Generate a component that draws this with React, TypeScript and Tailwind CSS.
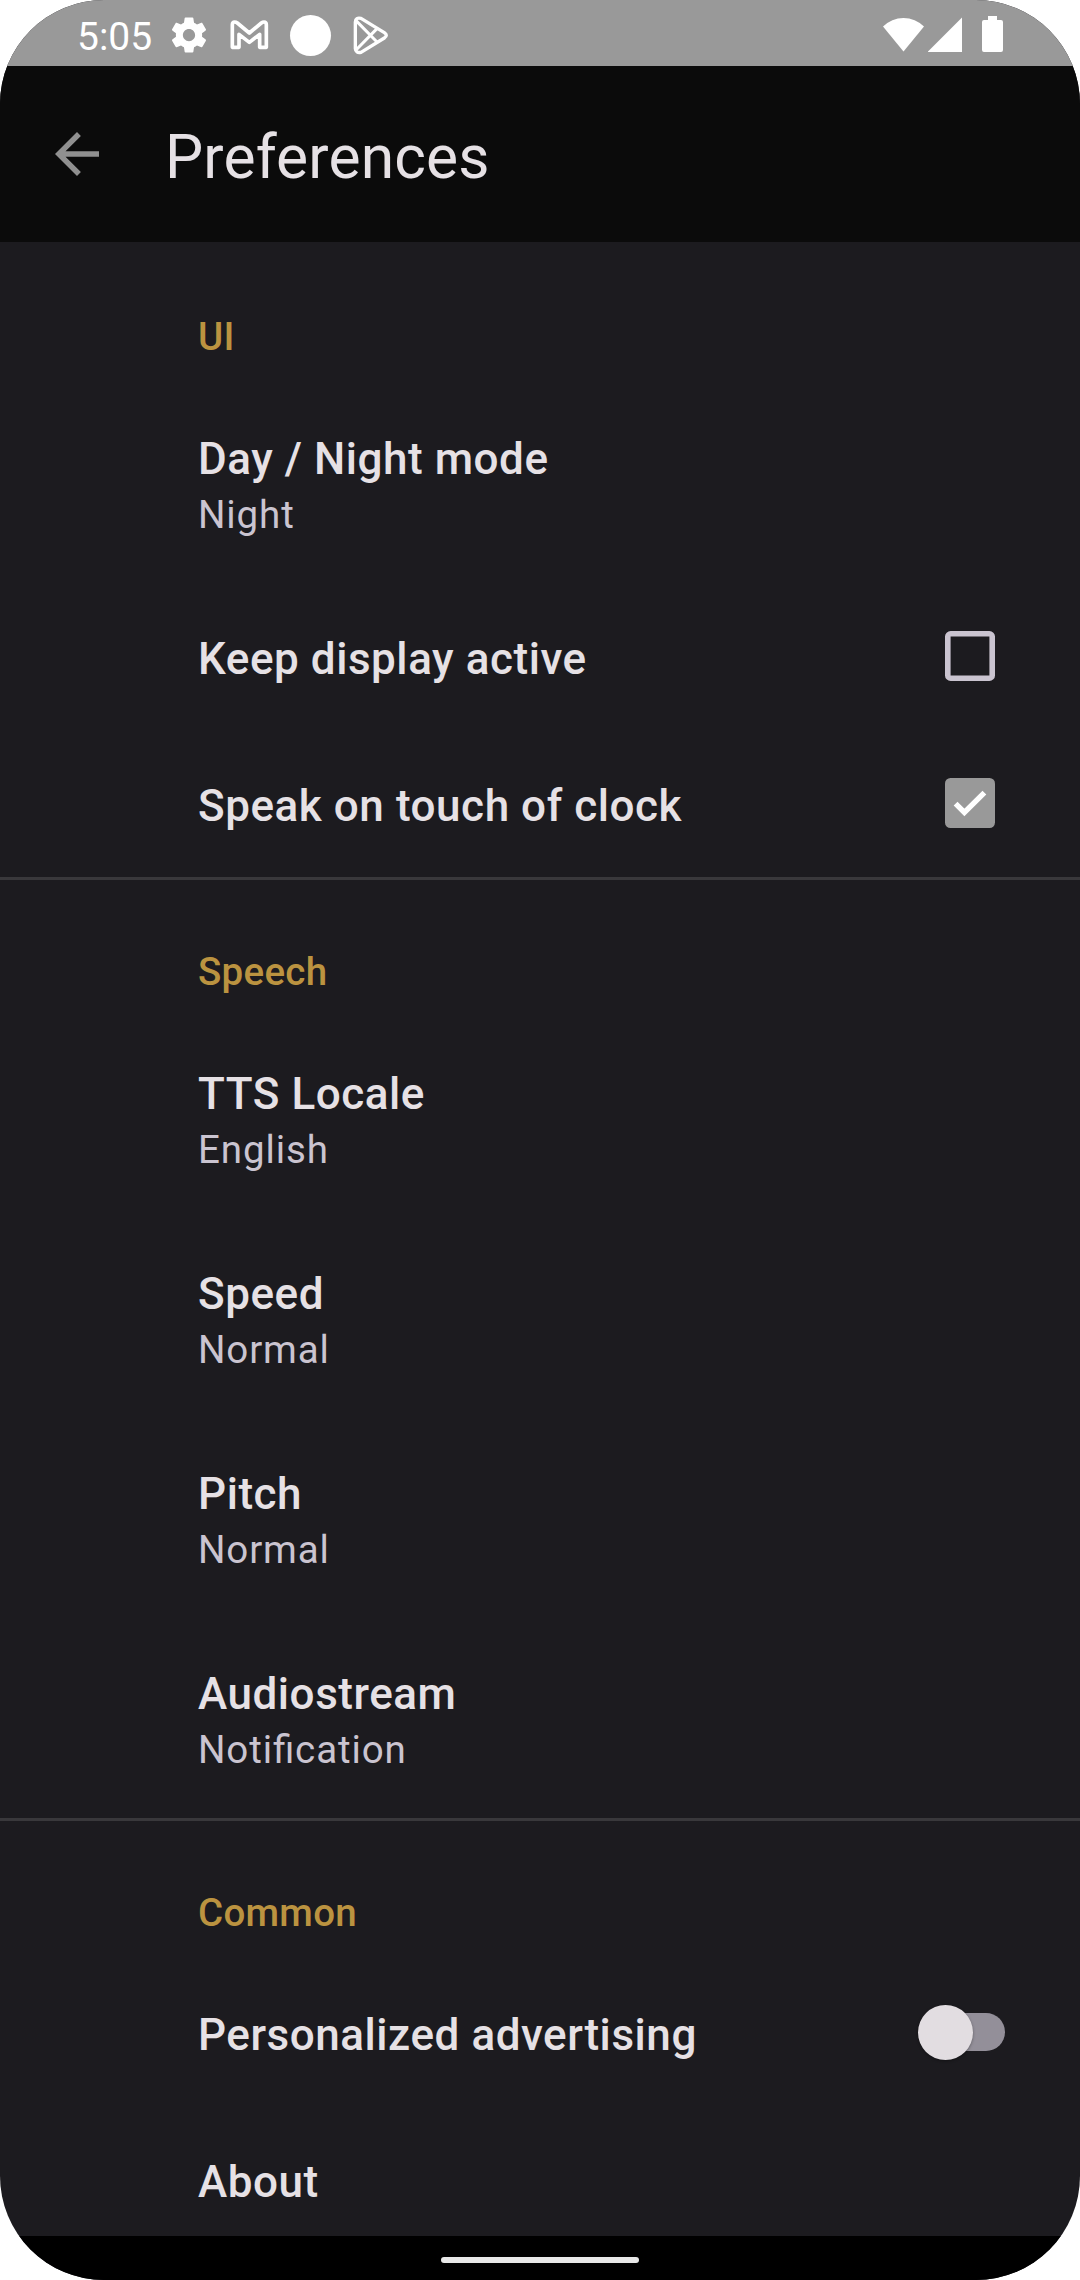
import type { ReactNode } from 'react'

function StatusBar() {
  return (
    <div className="flex h-[66px] shrink-0 items-start justify-between bg-[#999999] text-white">
      <div className="flex h-full">
        <span className="ml-[77px] mt-[14px] w-[90px] text-[39px] leading-[46px]">5:05</span>
        <svg className="ml-[1px] mt-[14px] size-[42px]" viewBox="0 0 24 24" fill="currentColor">
          <path d="M19.43 12.98c.04-.32.07-.64.07-.98s-.03-.66-.07-.98l2.11-1.65c.19-.15.24-.42.12-.64l-2-3.46c-.12-.22-.39-.3-.61-.22l-2.49 1c-.52-.4-1.08-.73-1.69-.98l-.38-2.65C14.46 2.18 14.25 2 14 2h-4c-.25 0-.46.18-.49.42l-.38 2.65c-.61.25-1.17.59-1.69.98l-2.49-1c-.23-.09-.49 0-.61.22l-2 3.46c-.13.22-.07.49.12.64l2.11 1.65c-.04.32-.07.65-.07.98s.03.66.07.98l-2.11 1.65c-.19.15-.24.42-.12.64l2 3.46c.12.22.39.3.61.22l2.49-1c.52.4 1.08.73 1.69.98l.38 2.65c.03.24.24.42.49.42h4c.25 0 .46-.18.49-.42l.38-2.65c.61-.25 1.17-.59 1.69-.98l2.49 1c.23.09.49 0 .61-.22l2-3.46c.12-.22.07-.49-.12-.64l-2.11-1.65zM12 15.5c-1.93 0-3.5-1.57-3.5-3.5s1.57-3.5 3.5-3.5 3.5 1.57 3.5 3.5-1.57 3.5-3.5 3.5z" />
        </svg>
        <svg className="ml-[20px] mt-[18px] h-[34px] w-[40px]" viewBox="690 54 120 102" fill="none" stroke="currentColor" strokeWidth="11" strokeLinejoin="round">
          <path d="M697 142V74Q697 66 704 66Q708 66 712 69L748 99L784 69Q788 66 792 66Q799 66 799 74V142H779V103L748 127L717 103V142Z" />
        </svg>
        <span className="ml-[20px] mt-[15px] size-[41px] rounded-full bg-white" />
        <svg className="ml-[20px] mt-[15px] h-[41px] w-[40px]" viewBox="1054 45 120 123" fill="none" stroke="currentColor" strokeWidth="10" strokeLinejoin="round">
          <path d="M1067 66V146Q1068 160 1084 157L1154 114Q1166 106 1154 98L1084 55Q1068 51 1067 66Z" />
          <path d="M1069 62L1132 126M1069 150L1132 86" strokeWidth="9" />
        </svg>
      </div>
      <div className="mr-[77px] flex h-full">
        <svg className="mt-[17px] h-[35px] w-[42px]" viewBox="0 0 42 35" fill="currentColor">
          <path d="M20.5 34.5L0 9.5A29 29 0 0 1 41 9.5Z" />
        </svg>
        <svg className="ml-[3px] mt-[17px] size-[35px]" viewBox="0 0 35 35" fill="currentColor">
          <path d="M-0.5 35L34 0.5V35Z" />
        </svg>
        <svg className="ml-[19px] mt-[16px] h-[36px] w-[21px]" viewBox="0 0 21 36" fill="currentColor">
          <path d="M6 0H15V4H19Q21 4 21 6V34Q21 36 19 36H2Q0 36 0 34V6Q0 4 2 4H6Z" />
        </svg>
      </div>
    </div>
  )
}

function Category({ title, divided, children }: { title: string; divided?: boolean; children: ReactNode }) {
  return (
    <section className={divided ? 'shadow-[inset_0_3px_0_#39383b]' : ''}>
      <h2 className="h-[141px] pl-[198px] pt-[72px] text-[38.5px] leading-[46px] font-medium tracking-[0.275px] text-[#bb9340]">
        {title}
      </h2>
      {children}
    </section>
  )
}

function Row({ title, summary, children }: { title: string; summary?: string; children?: ReactNode }) {
  return (
    <div className={`flex items-start justify-between pl-[198px] ${summary ? 'h-[200px]' : 'h-[147px]'}`}>
      <div className="pt-[50px]">
        <p className="text-[44px] leading-[52px] font-medium tracking-[0.55px] whitespace-nowrap text-[#e6e1e5]">{title}</p>
        {summary && (
          <p className="mt-[7px] text-[38.5px] leading-[46px] tracking-[0.88px] text-[#cac4d0] [font-feature-settings:'liga']">
            {summary}
          </p>
        )}
      </div>
      {children}
    </div>
  )
}

function Checkbox({ checked }: { checked?: boolean }) {
  return (
    <svg className="mr-[85px] mt-[48px] size-[50px]" viewBox="0 0 50 50" fill="none">
      {checked ? (
        <>
          <rect width="50" height="50" rx="5.5" fill="#999999" />
          <path d="M10.6 25.6L19.4 34.4L39.4 14.6" stroke="#fff" strokeWidth="5.4" />
        </>
      ) : (
        <rect x="2.8" y="2.8" width="44.4" height="44.4" rx="2.8" stroke="#cac4d0" strokeWidth="5.6" />
      )}
    </svg>
  )
}

function Toggle() {
  return (
    <span className="mr-[75px] mt-[54px] flex h-[38px] w-[80px] items-center rounded-full bg-[#938f99]">
      <span className="-ml-[7px] size-[55px] shrink-0 rounded-full bg-[#e2dde1] shadow-[0_1px_3px_rgba(0,0,0,0.35)]" />
    </span>
  )
}

export default function App() {
  return (
    <div className="h-[2280px] w-[1080px] bg-white">
      <div className="flex h-full flex-col overflow-hidden rounded-[104px] bg-[#1c1b1f] font-['Roboto',sans-serif]">
        <StatusBar />
        <header className="flex h-[176px] shrink-0 items-center bg-[#0b0b0b]">
          <svg className="ml-[44px] size-[66px]" viewBox="0 0 24 24" fill="#909090">
            <path d="M20 11H7.83l5.59-5.59L12 4l-8 8 8 8 1.41-1.41L7.83 13H20v-2z" />
          </svg>
          <h1 className="ml-[55px] mt-[7px] text-[60.5px] leading-[72px] tracking-[0.15px] text-[#e6e1e5]">Preferences</h1>
        </header>
        <main className="min-h-0 flex-1 overflow-hidden">
          <Category title="UI">
            <Row title="Day / Night mode" summary="Night" />
            <Row title="Keep display active">
              <Checkbox />
            </Row>
            <Row title="Speak on touch of clock">
              <Checkbox checked />
            </Row>
          </Category>
          <Category title="Speech" divided>
            <Row title="TTS Locale" summary="English" />
            <Row title="Speed" summary="Normal" />
            <Row title="Pitch" summary="Normal" />
            <Row title="Audiostream" summary="Notification" />
          </Category>
          <Category title="Common" divided>
            <Row title="Personalized advertising">
              <Toggle />
            </Row>
            <Row title="About" />
          </Category>
        </main>
        <div className="flex h-[44px] shrink-0 items-start justify-center bg-black pt-[21px]">
          <span className="h-[6px] w-[198px] rounded-full bg-[#e8e8e8]" />
        </div>
      </div>
    </div>
  )
}
